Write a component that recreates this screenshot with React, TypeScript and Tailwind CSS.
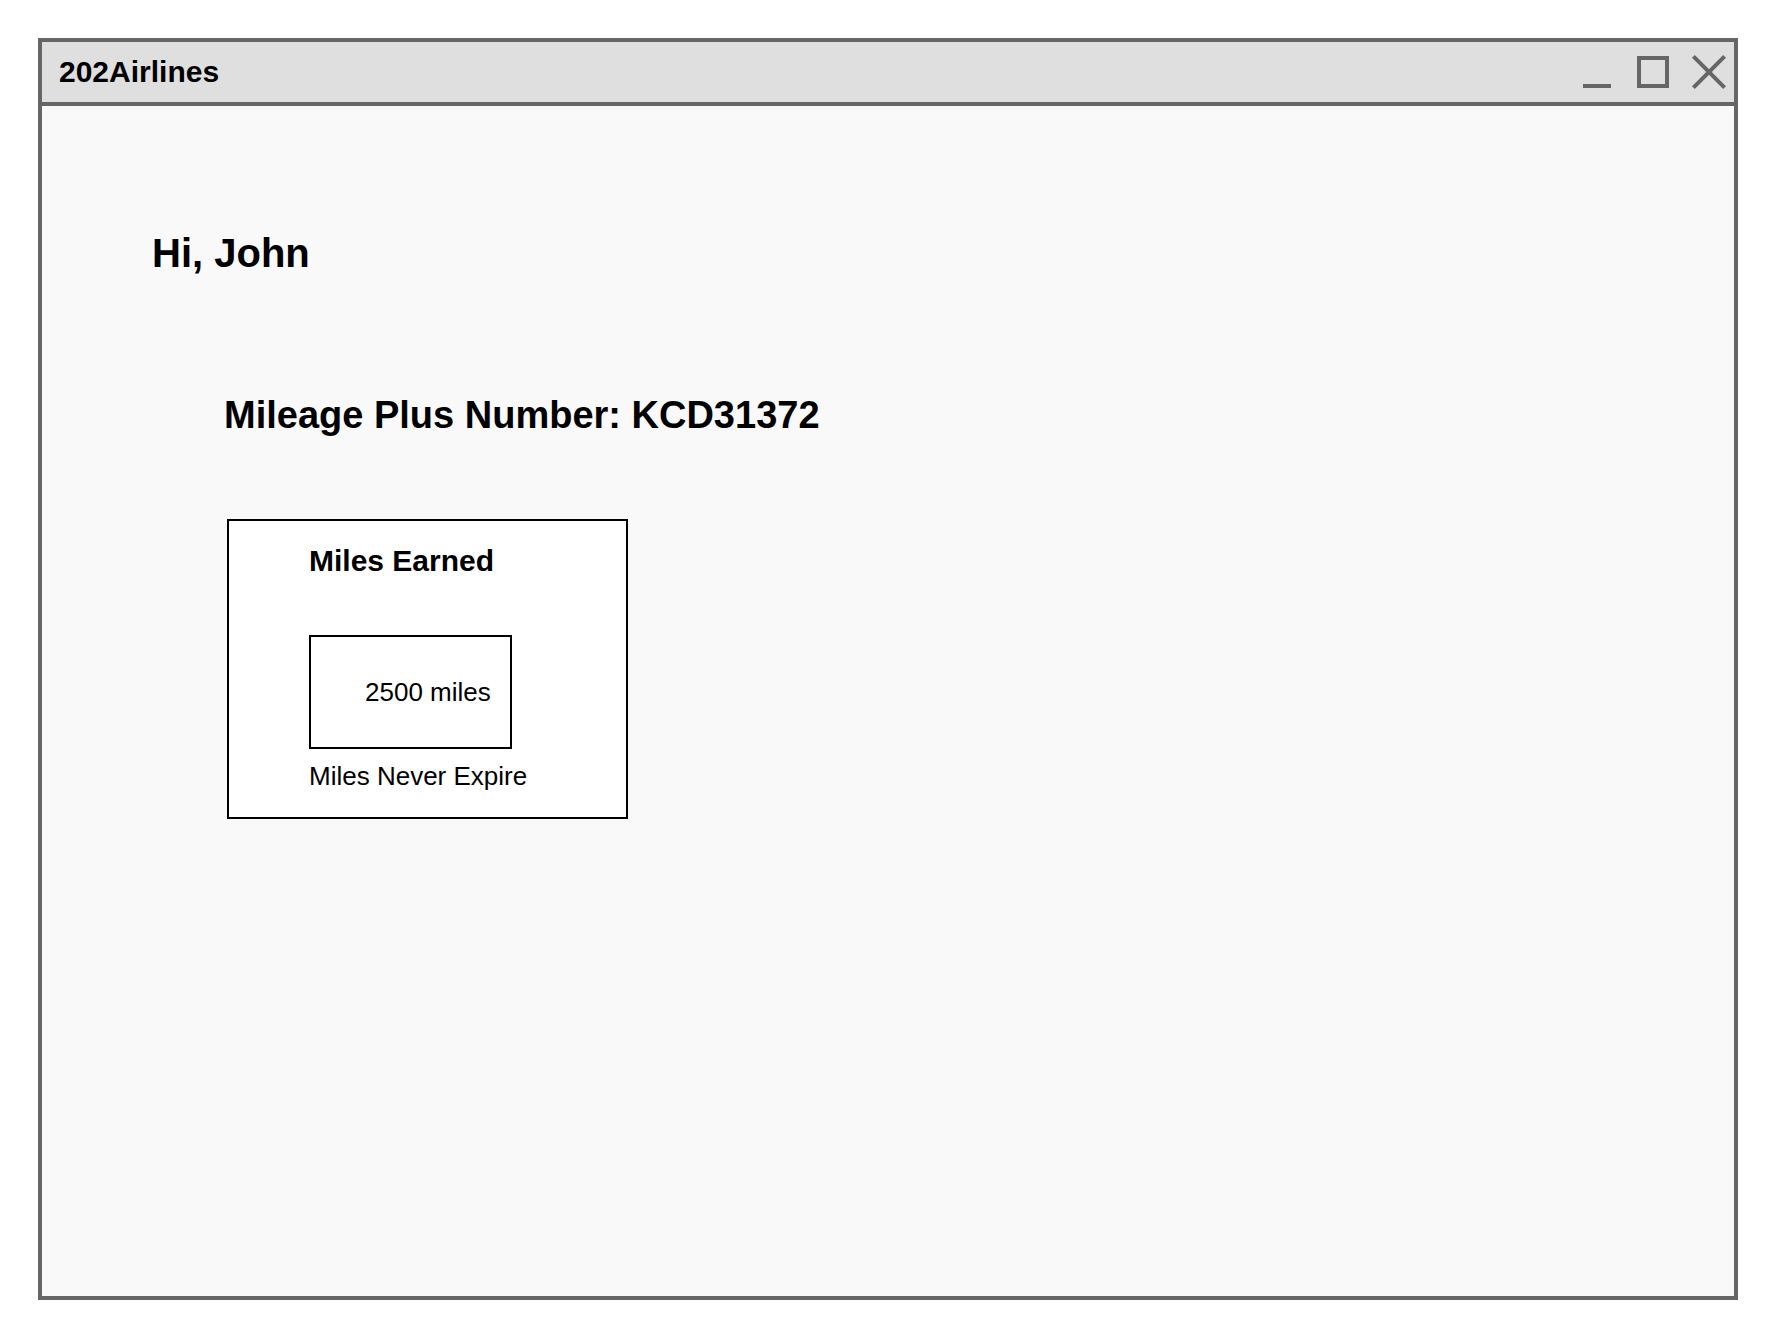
import React from "react";

export default function App() {
  return (
    <div className="min-h-[1338px] w-[1776px] bg-white pt-[38px] pl-[38px]" style={{ fontFamily: '"Liberation Sans", Arial, Helvetica, sans-serif' }}>
      <div className="flex h-[1262px] w-[1700px] flex-col border-4 border-[#666666] bg-[#f9f9f9]">
        {/* Title bar */}
        <div className="flex h-[64px] shrink-0 items-center border-b-4 border-[#666666] bg-[#dfdfdf] pl-[17px] pr-[8px]">
          <div className="text-[30px] font-bold leading-none text-black">202Airlines</div>
          <div className="ml-auto flex items-center">
            <div className="flex h-[32px] w-[28px] items-end">
              <div className="h-[4px] w-full bg-[#666666]" />
            </div>
            <div className="ml-[26px] h-[32px] w-[32px] border-4 border-[#666666]" />
            <svg className="ml-[23px]" width="34" height="34" viewBox="0 0 34 34">
              <line x1="1.4" y1="1.4" x2="32.6" y2="32.6" stroke="#666666" strokeWidth="4" />
              <line x1="32.6" y1="1.4" x2="1.4" y2="32.6" stroke="#666666" strokeWidth="4" />
            </svg>
          </div>
        </div>

        {/* Content */}
        <div className="flex flex-col items-start">
          <div className="ml-[110px] mt-[127px] text-[40px] font-bold leading-none text-black">Hi, John</div>
          <div className="ml-[182px] mt-[123px] text-[38px] font-bold leading-none text-black">
            Mileage Plus Number: KCD31372
          </div>
          <div className="ml-[185px] mt-[85px] flex h-[300px] w-[401px] flex-col items-start border-2 border-black bg-white pl-[80px] pt-[25px]">
            <div className="text-[30px] font-bold leading-none text-black">Miles Earned</div>
            <div className="mt-[59px] flex h-[114px] w-[203px] items-center border-2 border-black pl-[54px]">
              <span className="text-[26px] leading-none text-black">2500 miles</span>
            </div>
            <div className="mt-[14px] text-[26px] leading-none text-black">Miles Never Expire</div>
          </div>
        </div>
      </div>
    </div>
  );
}
